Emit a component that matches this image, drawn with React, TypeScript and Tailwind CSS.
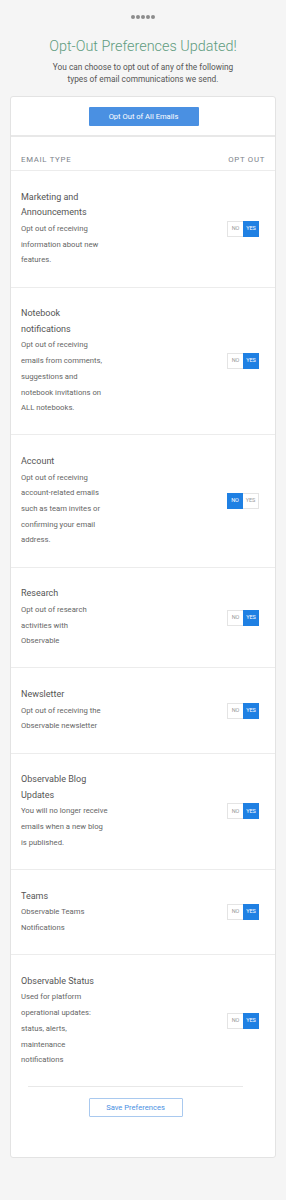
import React from 'react'

type Pref = { title: string[]; desc: string[]; on: boolean }

const PREFS: Pref[] = [
  { title: ['Marketing and', 'Announcements'], desc: ['Opt out of receiving', 'information about new', 'features.'], on: true },
  { title: ['Notebook', 'notifications'], desc: ['Opt out of receiving', 'emails from comments,', 'suggestions and', 'notebook invitations on', 'ALL notebooks.'], on: true },
  { title: ['Account'], desc: ['Opt out of receiving', 'account-related emails', 'such as team invites or', 'confirming your email', 'address.'], on: false },
  { title: ['Research'], desc: ['Opt out of research', 'activities with', 'Observable'], on: true },
  { title: ['Newsletter'], desc: ['Opt out of receiving the', 'Observable newsletter'], on: true },
  { title: ['Observable Blog', 'Updates'], desc: ['You will no longer receive', 'emails when a new blog', 'is published.'], on: true },
  { title: ['Teams'], desc: ['Observable Teams', 'Notifications'], on: true },
  { title: ['Observable Status'], desc: ['Used for platform', 'operational updates:', 'status, alerts,', 'maintenance', 'notifications'], on: true },
]

function Toggle({ on }: { on: boolean }) {
  return (
    <div className="flex h-[16px] w-[32px] text-[5.5px] leading-none">
      <div
        className={
          on
            ? 'flex w-[16px] items-center justify-center border border-[#e4e4e4] border-r-0 bg-white text-[#9a9a9a]'
            : 'flex w-[16px] items-center justify-center bg-[#1f80e3] text-white'
        }
      >
        NO
      </div>
      <div
        className={
          on
            ? 'flex w-[16px] items-center justify-center bg-[#1f80e3] text-white'
            : 'flex w-[16px] items-center justify-center border border-[#e4e4e4] border-l-0 bg-white text-[#9a9a9a]'
        }
      >
        YES
      </div>
    </div>
  )
}

function Row({ pref, last }: { pref: Pref; last: boolean }) {
  return (
    <div className={last ? 'flex items-center justify-between py-[18.5px] pl-[10px] pr-[16px]' : 'flex items-center justify-between border-b border-[#ececec] py-[18.5px] pl-[10px] pr-[16px]'}>
      <div className="leading-[15.7px]">
        {pref.title.map((t) => (
          <div key={t} className="text-[9px] text-[#555]">{t}</div>
        ))}
        {pref.desc.map((d) => (
          <div key={d} className="text-[7.7px] text-[#666]">{d}</div>
        ))}
      </div>
      <Toggle on={pref.on} />
    </div>
  )
}

export default function App() {
  return (
    <div className="min-h-[1200px] bg-[#f5f5f5] pt-[15px] font-['Roboto',sans-serif]">
      <div className="flex justify-center gap-[1px]">
        {[0, 1, 2, 3, 4].map((i) => (
          <div key={i} className="h-[4px] w-[4px] rounded-full bg-[#8c8c8c]" />
        ))}
      </div>
      <h1 className="mt-[18px] text-center text-[14.4px] font-light leading-[20px] text-[#5f9c80]">
        Opt-Out Preferences Updated!
      </h1>
      <p className="mt-[5px] text-center text-[8.3px] leading-[11.5px] text-[#555]">
        You can choose to opt out of any of the following
        <br />
        types of email communications we send.
      </p>

      <div className="mx-[10px] mt-[11px] rounded-[3px] border border-[#e3e3e3] bg-white">
        <div className="flex justify-center border-b-2 border-[#e8e8e8] pb-[9px] pt-[10px]">
          <button className="ml-[1px] h-[19px] w-[110px] rounded-[1px] bg-[#4a90e2] text-[7.6px] text-white">
            Opt Out of All Emails
          </button>
        </div>
        <div className="flex items-end justify-between border-b border-[#ececec] px-[10px] pb-[5px] pt-[17px] text-[7.8px] leading-[11px] tracking-[0.09em] text-[#7b8189]">
          <span>EMAIL TYPE</span>
          <span>OPT OUT</span>
        </div>
        {PREFS.map((p, i) => (
          <Row key={i} pref={p} last={i === PREFS.length - 1} />
        ))}
        <div className="ml-[17px] mr-[32px] border-t border-[#e8e8e8]" />
        <div className="flex justify-center pb-[40px] pt-[11px] pr-[15px]">
          <button className="h-[19px] w-[94px] rounded-[1px] border border-[#a9c9ef] bg-white text-[7.6px] text-[#4a90e2]">
            Save Preferences
          </button>
        </div>
      </div>
    </div>
  )
}
